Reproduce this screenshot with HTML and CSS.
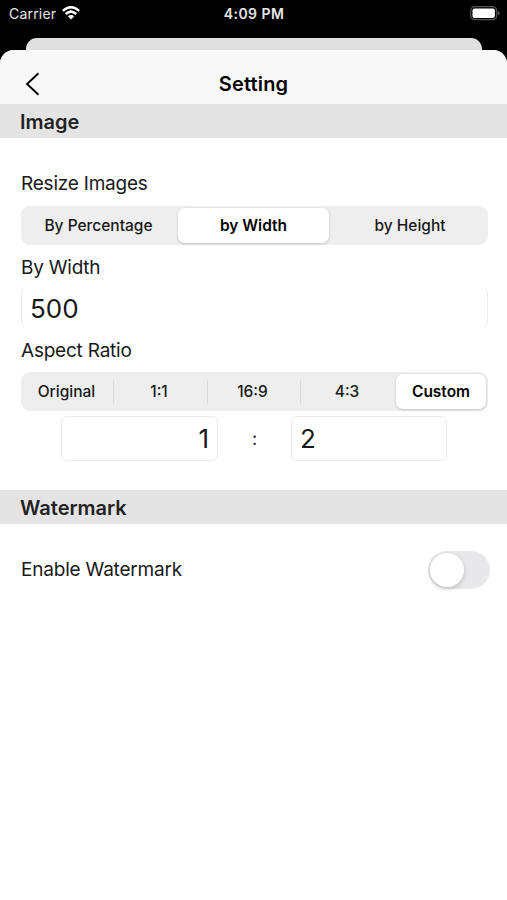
FILE: index.html
```html
<!DOCTYPE html>
<html lang="en">
<head>
<meta charset="utf-8">
<title>Setting</title>
<link rel="stylesheet" href="styles.css">
</head>
<body>
<header class="status">
  <div class="carrier"><span>Carrier</span>
    <svg class="wifi" width="18" height="14" viewBox="0 0 18 14" fill="none" stroke="#fff" stroke-width="2.5"><path d="M.9 4.9Q9-2.300 17.1 4.9M3.800 8Q9 3.300 14.200 8"/><path d="M9 13.500 5.800 10.300Q9 7.600 12.200 10.300Z" fill="#fff" stroke="none"/></svg>
  </div>
  <time class="clock">4:09 PM</time>
  <svg class="battery" width="30" height="15" viewBox="0 0 30 15"><rect x=".7" y=".7" width="26" height="13" rx="4" fill="none" stroke="#555" stroke-width="1.2"/><rect x="2.5" y="2.5" width="22.400" height="9.400" rx="2" fill="#fff"/><path d="M28 5q1.600.800 1.600 2.300T28 9.600z" fill="#646464"/></svg>
</header>
<div class="back-sheet"></div>
<main class="sheet">
  <nav class="nav">
    <svg class="chevron" width="16" height="24" viewBox="0 0 16 24" fill="none" stroke="#000" stroke-width="1.9"><path d="M13.500 1.200 2 12l11.500 10.800"/></svg>
    <h1 class="title">Setting</h1>
  </nav>
  <h2 class="band">Image</h2>
  <section class="image-settings">
    <div class="label resize-label"><span>Resize Images</span></div>
    <div class="segments thirds">
      <div class="seg percentage">By Percentage</div><div class="seg selected width">by Width</div><div class="seg height">by Height</div>
    </div>
    <div class="label width-label"><span>By Width</span></div>
    <div class="field open">500</div>
    <div class="label ratio-label"><span>Aspect Ratio</span></div>
    <div class="segments fifths">
      <div class="seg original">Original</div><div class="seg rule">1:1</div><div class="seg rule">16:9</div><div class="seg rule">4:3</div><div class="seg selected custom">Custom</div>
    </div>
    <div class="ratio">
      <div class="field box right">1</div><span class="colon">:</span><div class="field box">2</div>
    </div>
  </section>
  <h2 class="band watermark">Watermark</h2>
  <section class="toggle-row"><span class="toggle-label">Enable Watermark</span><div class="switch"><div class="knob"></div></div></section>
</main>
</body>
</html>
```
FILE: styles.css
```css
* { box-sizing: border-box; }
body { margin: 0; height: 900px; overflow: hidden; background: #000; color: #181818; font-family: Inter, "Liberation Sans", sans-serif; display: flex; flex-direction: column; }
.status { height: 38px; flex: none; display: grid; grid-template-columns: 1fr auto 1fr; padding: 0 7px 0 9px; color: #e8e8e8; font-size: 14px; line-height: 28px; }
.carrier { display: flex; gap: 6px; letter-spacing: .2px; }
.wifi { margin-top: 6px; }
.clock { font-weight: 600; letter-spacing: .45px; margin-left: -1px; }
.battery { justify-self: end; margin-top: 6px; }
.back-sheet { flex: none; height: 12px; margin: 0 25px 0 26px; background: #e0e0e0; border-radius: 11px 11px 0 0; }
.sheet { flex: 1; background: #fff; border-radius: 14px 14px 0 0; overflow: hidden; }
.nav { height: 54px; background: #f8f8f8; display: grid; grid-template-columns: 1fr auto 1fr; padding: 0 25px; }
.chevron { margin-top: 22px; }
.title { margin: 14px 0 0; color: #000; font-size: 20px; font-weight: 600; line-height: 40px; letter-spacing: .15px; }
.band { margin: 0; height: 34px; padding-left: 20px; background: #e4e4e4; color: #222; font-size: 20px; font-weight: 600; line-height: 36px; }
.image-settings { padding: 34px 19px 0 21px; height: 352px; }
.label { height: 24px; line-height: 24px; font-size: 19px; letter-spacing: -.22px; }
.segments { display: grid; background: #eee; border-radius: 9px; padding: 2px; font-size: 15.500px; font-weight: 500; line-height: 35px; text-align: center; height: 39px; }
.resize-label { margin-bottom: 10px; }
.thirds { grid-template-columns: 155px 151px 1fr; }
.fifths { grid-template-columns: 90px 94px 93px 96px 1fr; }
.seg { white-space: nowrap; }
.selected { background: #fff; border-radius: 7px; color: #000; font-weight: 600; letter-spacing: -.02px; box-shadow: 0 1px 3px rgb(0 0 0 / 18%); }
.percentage { padding-right: 4px; }
.height { padding-left: 5px; }
.original { padding-right: 3px; }
.rule { padding-right: 2px; }
.width-label { margin: 10px 0 8px; line-height: 25px; }
.field { border: 1px solid #ececec; border-radius: 6px; font-size: 26px; padding: 0 8px; }
.open { height: 41px; line-height: 43px; border-width: 0 1px; }
.ratio-label { margin: 10px 0; line-height: 25px; }
.rule { background: linear-gradient(#d8d8d8, #d8d8d8) left center / 1px 24px no-repeat; }
.ratio { margin: 5px 41px 0 40px; display: grid; grid-template-columns: 157px 1fr 156px; }
.box { height: 45px; line-height: 44px; }
.right { text-align: right; }
.colon { text-align: center; font-size: 18px; line-height: 46px; }
.toggle-row { display: flex; justify-content: space-between; padding: 27px 17px 0 21px; }
.toggle-label { font-size: 19px; line-height: 38px; letter-spacing: -.2px; }
.switch { width: 62px; height: 38px; border-radius: 19px; background: #e8e8ea; padding: 2px; }
.knob { width: 34px; height: 34px; border-radius: 50%; background: #fff; box-shadow: 0 2px 5px rgb(0 0 0 / 18%); }
```
